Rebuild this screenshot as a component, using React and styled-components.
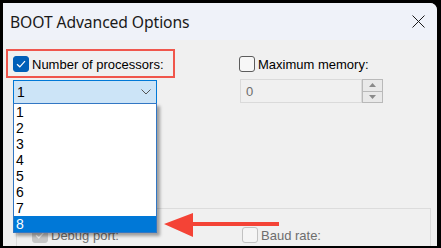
import React from "react";
import styled, { createGlobalStyle } from "styled-components";

const Global = createGlobalStyle`
  html, body { margin: 0; padding: 0; background: #000; }
  body { width: 441px; height: 248px; overflow: hidden; }
  * { box-sizing: border-box; }
`;

const Frame = styled.div`
  width: 441px;
  height: 248px;
  padding: 3px 4px 2px 3px;
  background: #000;
`;

const Window = styled.div`
  height: 100%;
  background: #f0f0f0;
  border-top-right-radius: 7px;
  overflow: hidden;
  display: flex;
  flex-direction: column;
  font-family: "Liberation Sans", Arial, sans-serif;
  font-size: 13px;
  color: #000;
`;

const TitleBar = styled.div`
  height: 37px;
  flex: none;
  background: #eff2f9;
  display: flex;
  align-items: center;
  justify-content: space-between;
  padding: 0 12px 0 7px;
`;

const Title = styled.span`
  font-family: "Noto Sans", "Open Sans", sans-serif;
  font-size: 15.7px;
  color: #1a1a1a;
  letter-spacing: -0.1px;
  margin-top: 1px;
`;

const Content = styled.div`
  position: relative;
  flex: 1;
  padding: 9px 0 0 3px;
`;

const TopRow = styled.div`
  display: grid;
  grid-template-columns: 233px 1fr;
  height: 159px;
`;

const Column = styled.div`
  display: flex;
  flex-direction: column;
  align-items: flex-start;
`;

const Highlight = styled.div`
  border: 2px solid #f0564b;
  padding: 5px 9px 4px 5px;
  display: flex;
`;

const CheckRow = styled.label`
  display: flex;
  align-items: center;
  gap: 3px;
  height: 16px;
  color: ${(p) => (p.$disabled ? "#6d6d6d" : "#000")};
  white-space: nowrap;
`;

const Box = styled.span`
  width: 16px;
  height: 16px;
  flex: none;
  border-radius: 3px;
  display: flex;
  align-items: center;
  justify-content: center;
  background: ${(p) =>
    p.$checked ? (p.$disabled ? "#c6c6c6" : "#005fb8") : p.$disabled ? "#f5f5f5" : "#f7f7f7"};
  border: 1px solid
    ${(p) => (p.$checked ? (p.$disabled ? "#c6c6c6" : "#005fb8") : p.$disabled ? "#c2c2c2" : "#5c5c5c")};
`;

const Combo = styled.div`
  margin: 2px 0 0 7px;
  width: 144px;
  height: 24px;
  border: 1px solid #0078d7;
  background: #cce4f7;
  display: flex;
  align-items: center;
  justify-content: space-between;
  padding: 0 5px 0 3px;
  font-size: 14px;
`;

const RightColumn = styled(Column)`
  padding-top: 7px;
`;

const Spin = styled.div`
  margin: 7px 0 0 1px;
  display: flex;
  height: 24px;
`;

const SpinField = styled.div`
  width: 122px;
  height: 24px;
  border: 1px solid #dadada;
  background: #f0f0f0;
  color: #6d6d6d;
  display: flex;
  align-items: center;
  padding-left: 5px;
`;

const SpinButtons = styled.div`
  display: flex;
  flex-direction: column;
  width: 21px;
`;

const SpinButton = styled.div`
  flex: 1;
  border: 1px solid #b9b9b9;
  border-top-width: ${(p) => (p.$down ? "0" : "1px")};
  background: #e9e9e9;
  display: flex;
  align-items: center;
  justify-content: center;
`;

const GroupBox = styled.div`
  margin-left: 10px;
  width: 415px;
  height: 60px;
  border: 1px solid #dcdcdc;
  display: grid;
  grid-template-columns: 210px 1fr;
  padding: 18px 0 0 15px;
  align-items: start;
`;

const ListBox = styled.div`
  position: absolute;
  left: 10px;
  top: 63px;
  width: 144px;
  height: 130px;
  border: 1px solid #3277c4;
  background: #fff;
  box-shadow: 3px 3px 3px rgba(0, 0, 0, 0.35);
  display: flex;
  flex-direction: column;
`;

const Item = styled.div`
  height: 16px;
  line-height: 16px;
  padding-left: 2px;
  font-size: 14px;
  background: ${(p) => (p.$selected ? "#0078d7" : "transparent")};
  color: ${(p) => (p.$selected ? "#fff" : "#000")};
`;

const Arrow = styled.svg`
  position: absolute;
  left: 160px;
  top: 172px;
`;

const Check = ({ color = "#fff" }) => (
  <svg width="10" height="8" viewBox="0 0 10 8">
    <path d="M1 4.2 L3.8 6.8 L9 1.2" fill="none" stroke={color} strokeWidth="1.2" />
  </svg>
);

export default function App() {
  const items = [1, 2, 3, 4, 5, 6, 7, 8];
  return (
    <Frame>
      <Global />
      <Window>
        <TitleBar>
          <Title>BOOT Advanced Options</Title>
          <svg width="13" height="13" viewBox="0 0 13 13">
            <path d="M0.5 0.5 L12.5 12.5 M12.5 0.5 L0.5 12.5" stroke="#1a1a1a" strokeWidth="1" />
          </svg>
        </TitleBar>
        <Content>
          <TopRow>
            <Column>
              <Highlight>
                <CheckRow>
                  <Box $checked>
                    <Check />
                  </Box>
                  Number of processors:
                </CheckRow>
              </Highlight>
              <Combo>
                <span>1</span>
                <svg width="10" height="6" viewBox="0 0 10 6">
                  <path d="M0.5 0.5 L5 5 L9.5 0.5" fill="none" stroke="#555" strokeWidth="1" />
                </svg>
              </Combo>
            </Column>
            <RightColumn>
              <CheckRow>
                <Box />
                Maximum memory:
              </CheckRow>
              <Spin>
                <SpinField>0</SpinField>
                <SpinButtons>
                  <SpinButton>
                    <svg width="7" height="4" viewBox="0 0 7 4">
                      <path d="M0 4 L3.5 0 L7 4 Z" fill="#8a8a8a" />
                    </svg>
                  </SpinButton>
                  <SpinButton $down>
                    <svg width="7" height="4" viewBox="0 0 7 4">
                      <path d="M0 0 L3.5 4 L7 0 Z" fill="#8a8a8a" />
                    </svg>
                  </SpinButton>
                </SpinButtons>
              </Spin>
            </RightColumn>
          </TopRow>
          <GroupBox>
            <CheckRow $disabled>
              <Box $checked $disabled>
                <Check color="#f4f4f4" />
              </Box>
              Debug port:
            </CheckRow>
            <CheckRow $disabled>
              <Box $disabled />
              Baud rate:
            </CheckRow>
          </GroupBox>
          <ListBox>
            {items.map((n) => (
              <Item key={n} $selected={n === 8}>
                {n}
              </Item>
            ))}
          </ListBox>
          <Arrow width="117" height="26" viewBox="0 0 117 26">
            <path d="M1 12 L30 1 L30 10 L116 10 L116 14 L30 14 L30 25 Z" fill="#f44336" />
          </Arrow>
        </Content>
      </Window>
    </Frame>
  );
}
